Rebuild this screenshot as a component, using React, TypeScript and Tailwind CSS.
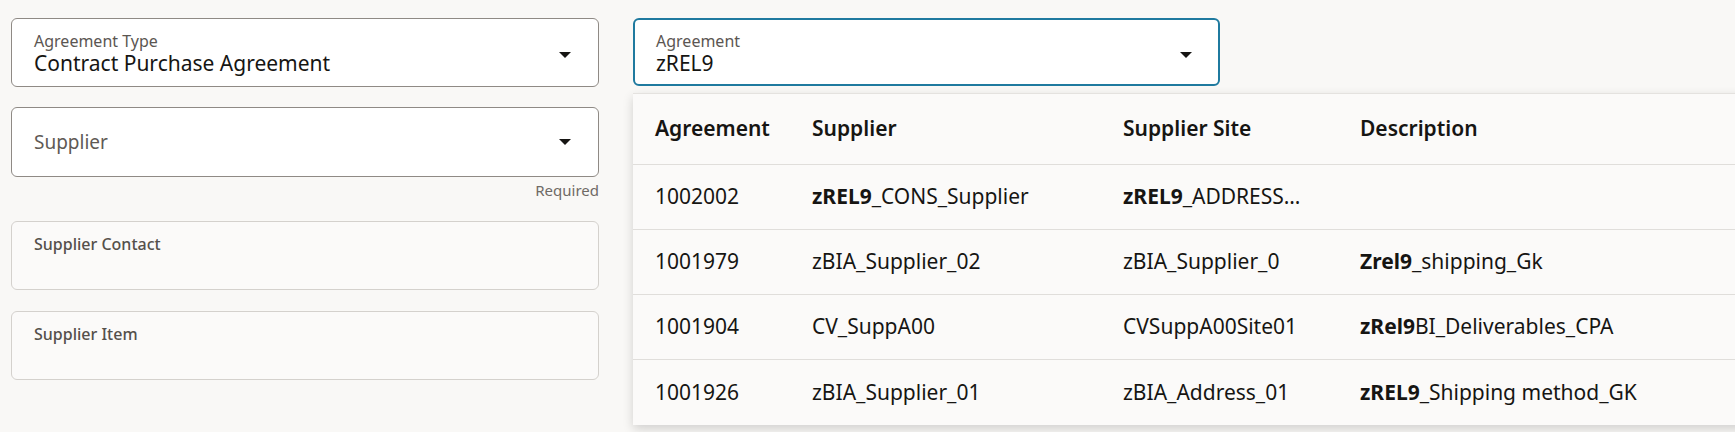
import React from "react";

function Caret() {
  return (
    <svg width="12" height="6" viewBox="0 0 12 6" className="shrink-0">
      <path d="M0 0h12L6 6z" fill="#161513" />
    </svg>
  );
}

function SelectField({ label, value }: { label: string; value: string }) {
  return (
    <div className="flex h-[69px] items-start justify-between rounded-md border border-[#8f8a85] bg-white pl-[22px] pr-[27px] pt-[12px]">
      <div className="flex flex-col">
        <span className="text-[16px] leading-[20px] text-[#5b5652]">{label}</span>
        <span className="text-[21px] leading-[24px] text-[#161513]">{value}</span>
      </div>
      <div className="pt-[21px]">
        <Caret />
      </div>
    </div>
  );
}

function ReadOnlyField({ label }: { label: string }) {
  return (
    <div className="h-[69px] rounded-md border border-[#d4d1cd] bg-[#fbfaf9] pl-[22px] pt-[10px]">
      <span className="text-[16px] font-medium leading-[20px] text-[#55504b]">{label}</span>
    </div>
  );
}

interface Row {
  id: string;
  supplier: React.ReactNode;
  site: React.ReactNode;
  desc: React.ReactNode;
}

const rows: Row[] = [
  {
    id: "1002002",
    supplier: (
      <>
        <b className="font-bold">zREL9</b>_CONS_Supplier
      </>
    ),
    site: (
      <>
        <b className="font-bold">zREL9</b>_ADDRESS…
      </>
    ),
    desc: null,
  },
  {
    id: "1001979",
    supplier: "zBIA_Supplier_02",
    site: "zBIA_Supplier_0",
    desc: (
      <>
        <b className="font-bold">Zrel9</b>_shipping_Gk
      </>
    ),
  },
  {
    id: "1001904",
    supplier: "CV_SuppA00",
    site: "CVSuppA00Site01",
    desc: (
      <>
        <b className="font-bold">zRel9</b>BI_Deliverables_CPA
      </>
    ),
  },
  {
    id: "1001926",
    supplier: "zBIA_Supplier_01",
    site: "zBIA_Address_01",
    desc: (
      <>
        <b className="font-bold">zREL9</b>_Shipping method_GK
      </>
    ),
  },
];

const cols = "grid grid-cols-[157px_311px_237px_1fr] items-center pl-[22px]";

export default function App() {
  return (
    <div
      className="relative h-[432px] w-full overflow-hidden bg-[#f9f8f6] text-[#161513]"
      style={{ fontFamily: '"Noto Sans", sans-serif' }}
    >
      <div className="flex gap-[34px] pl-[11px] pt-[18px]">
        <div className="flex w-[588px] flex-col">
          <SelectField label="Agreement Type" value="Contract Purchase Agreement" />
          <div className="mt-[20px] flex h-[70px] items-center justify-between rounded-md border border-[#8f8a85] bg-white pl-[22px] pr-[27px]">
            <span className="text-[19px] text-[#5f5a55]">Supplier</span>
            <Caret />
          </div>
          <div className="mt-[3px] text-right text-[15px] leading-[20px] text-[#6f6a65]">Required</div>
          <div className="mt-[21px] flex flex-col gap-[21px]">
            <ReadOnlyField label="Supplier Contact" />
            <ReadOnlyField label="Supplier Item" />
          </div>
        </div>

        <div className="flex h-[68px] w-[587px] items-start justify-between rounded-md border-2 border-[#1f7a9f] bg-white pl-[21px] pr-[26px] pt-[11px]">
          <div className="flex flex-col">
            <span className="text-[16px] leading-[20px] text-[#5b5652]">Agreement</span>
            <span className="text-[21px] leading-[24px]">zREL9</span>
          </div>
          <div className="pt-[21px]">
            <Caret />
          </div>
        </div>
      </div>

      <div className="absolute left-[633px] right-[-20px] top-[93px] border-t border-[#e4e2df] bg-[#fbfaf9] shadow-[0_4px_10px_rgba(0,0,0,0.16)]">
        <div className={`${cols} h-[71px] border-b border-[#e0dedb] text-[21px] font-semibold`}>
          <span>Agreement</span>
          <span>Supplier</span>
          <span>Supplier Site</span>
          <span>Description</span>
        </div>
        {rows.map((r, i) => (
          <div
            key={r.id}
            className={`${cols} h-[65px] text-[21px] ${i < rows.length - 1 ? "border-b border-[#e0dedb]" : ""}`}
          >
            <span>{r.id}</span>
            <span className="whitespace-nowrap">{r.supplier}</span>
            <span className="whitespace-nowrap">{r.site}</span>
            <span className="whitespace-nowrap">{r.desc}</span>
          </div>
        ))}
      </div>
    </div>
  );
}
